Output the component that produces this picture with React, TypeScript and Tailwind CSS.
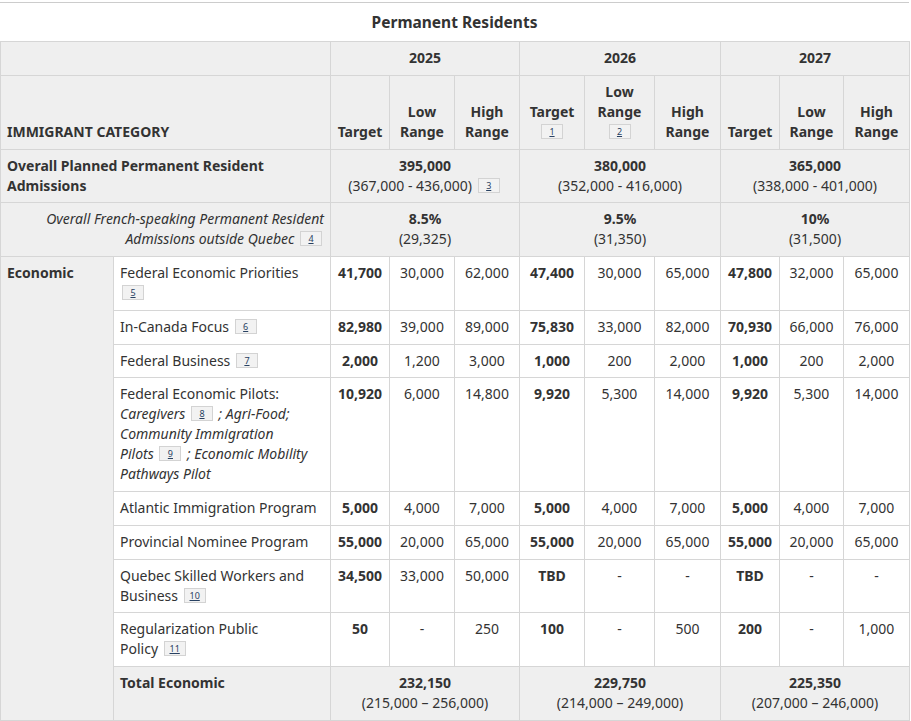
import type { ReactNode } from "react";

// footnote marker box, like the canada.ca "fn-lnk" links
function Fn({ n }: { n: number }) {
  return (
    <span className="mx-[2px] inline-block h-[15px] min-w-[22px] border border-[#d3d3d3] bg-[#f2f2f2] px-[4px] text-center align-[2px] text-[9px] font-normal not-italic leading-[13px] text-[#284162] underline">
      {n}
    </span>
  );
}

const th = "border border-[#d6d6d6] bg-[#efefef] px-[6px] pt-[6px] pb-[6.75px] font-bold";
const td = "border border-[#d6d6d6] px-[6px] pt-[6px] pb-[6.75px] align-top";

type Row = {
  label: ReactNode;
  values: string[]; // 9 values, every 3rd is a target
};

const rows: Row[] = [
  {
    label: (
      <>
        Federal Economic Priorities
        <br />
        <Fn n={5} />
      </>
    ),
    values: ["41,700", "30,000", "62,000", "47,400", "30,000", "65,000", "47,800", "32,000", "65,000"],
  },
  {
    label: (
      <>
        In-Canada Focus <Fn n={6} />
      </>
    ),
    values: ["82,980", "39,000", "89,000", "75,830", "33,000", "82,000", "70,930", "66,000", "76,000"],
  },
  {
    label: (
      <>
        Federal Business <Fn n={7} />
      </>
    ),
    values: ["2,000", "1,200", "3,000", "1,000", "200", "2,000", "1,000", "200", "2,000"],
  },
  {
    label: (
      <>
        Federal Economic Pilots:
        <br />
        <i>
          Caregivers <Fn n={8} /> ; Agri-Food;
          <br />
          Community Immigration
          <br />
          Pilots <Fn n={9} /> ; Economic Mobility
          <br />
          Pathways Pilot
        </i>
      </>
    ),
    values: ["10,920", "6,000", "14,800", "9,920", "5,300", "14,000", "9,920", "5,300", "14,000"],
  },
  {
    label: "Atlantic Immigration Program",
    values: ["5,000", "4,000", "7,000", "5,000", "4,000", "7,000", "5,000", "4,000", "7,000"],
  },
  {
    label: "Provincial Nominee Program",
    values: ["55,000", "20,000", "65,000", "55,000", "20,000", "65,000", "55,000", "20,000", "65,000"],
  },
  {
    label: (
      <>
        Quebec Skilled Workers and
        <br />
        Business <Fn n={10} />
      </>
    ),
    values: ["34,500", "33,000", "50,000", "TBD", "-", "-", "TBD", "-", "-"],
  },
  {
    label: (
      <>
        Regularization Public
        <br />
        Policy <Fn n={11} />
      </>
    ),
    values: ["50", "-", "250", "100", "-", "500", "200", "-", "1,000"],
  },
];

const overall = [
  { total: "395,000", range: "(367,000 - 436,000)", fn: 3 },
  { total: "380,000", range: "(352,000 - 416,000)" },
  { total: "365,000", range: "(338,000 - 401,000)" },
];

const french = [
  { pct: "8.5%", n: "(29,325)" },
  { pct: "9.5%", n: "(31,350)" },
  { pct: "10%", n: "(31,500)" },
];

const totals = [
  { total: "232,150", range: "(215,000 – 256,000)" },
  { total: "229,750", range: "(214,000 – 249,000)" },
  { total: "225,350", range: "(207,000 – 246,000)" },
];

const colWidths = [113, 217, 59, 65, 65, 65, 70, 66, 59, 64, 66];

export default function App() {
  return (
    <div className="min-h-[721px] bg-white pt-[2px] font-['Noto_Sans',sans-serif] text-[14px] leading-[20px] text-[#333]">
      <div className="w-[909px] border-t border-[#cccccc]">
        {/* Caption */}
        <div className="flex h-[38px] items-center justify-center text-[15.5px] font-bold">
          Permanent Residents
        </div>

        <table className="w-[909px] table-fixed border-collapse">
          <colgroup>
            {colWidths.map((w, i) => (
              <col key={i} style={{ width: w }} />
            ))}
          </colgroup>
          <thead>
            <tr>
              <th colSpan={2} className={th}></th>
              <th colSpan={3} className={`${th} text-center`}>2025</th>
              <th colSpan={3} className={`${th} text-center`}>2026</th>
              <th colSpan={3} className={`${th} text-center`}>2027</th>
            </tr>
            <tr className="align-bottom">
              <th colSpan={2} className={`${th} text-left`}>IMMIGRANT CATEGORY</th>
              <th className={`${th} text-center`}>Target</th>
              <th className={`${th} text-center`}>Low Range</th>
              <th className={`${th} text-center`}>High Range</th>
              <th className={`${th} text-center`}>
                Target
                <br />
                <Fn n={1} />
              </th>
              <th className={`${th} text-center`}>
                Low
                <br />
                Range
                <br />
                <Fn n={2} />
              </th>
              <th className={`${th} text-center`}>High Range</th>
              <th className={`${th} text-center`}>Target</th>
              <th className={`${th} text-center`}>Low Range</th>
              <th className={`${th} text-center`}>High Range</th>
            </tr>
          </thead>
          <tbody>
            {/* Overall planned */}
            <tr className="bg-[#efefef]">
              <td colSpan={2} className={`${td} font-bold`}>
                Overall Planned Permanent Resident
                <br />
                Admissions
              </td>
              {overall.map((o) => (
                <td key={o.total} colSpan={3} className={`${td} text-center`}>
                  <b>{o.total}</b>
                  <br />
                  {o.range}
                  {o.fn && (
                    <>
                      {" "}
                      <Fn n={o.fn} />
                    </>
                  )}
                </td>
              ))}
            </tr>

            {/* French-speaking */}
            <tr className="bg-[#efefef]">
              <td colSpan={2} className={`${td} text-right italic`}>
                Overall French-speaking Permanent Resident
                <br />
                Admissions outside Quebec <Fn n={4} />
              </td>
              {french.map((f) => (
                <td key={f.pct} colSpan={3} className={`${td} text-center`}>
                  <b>{f.pct}</b>
                  <br />
                  {f.n}
                </td>
              ))}
            </tr>

            {/* Economic rows */}
            {rows.map((row, ri) => (
              <tr key={ri}>
                {ri === 0 && (
                  <td rowSpan={rows.length + 1} className={`${td} bg-[#efefef] font-bold`}>
                    Economic
                  </td>
                )}
                <td className={td}>{row.label}</td>
                {row.values.map((v, i) => (
                  <td key={i} className={`${td} text-center ${i % 3 === 0 ? "font-bold" : ""}`}>
                    {v}
                  </td>
                ))}
              </tr>
            ))}

            {/* Total */}
            <tr className="bg-[#efefef]">
              <td className={`${td} font-bold`}>Total Economic</td>
              {totals.map((t) => (
                <td key={t.total} colSpan={3} className={`${td} text-center`}>
                  <b>{t.total}</b>
                  <br />
                  {t.range}
                </td>
              ))}
            </tr>
          </tbody>
        </table>
      </div>
    </div>
  );
}
